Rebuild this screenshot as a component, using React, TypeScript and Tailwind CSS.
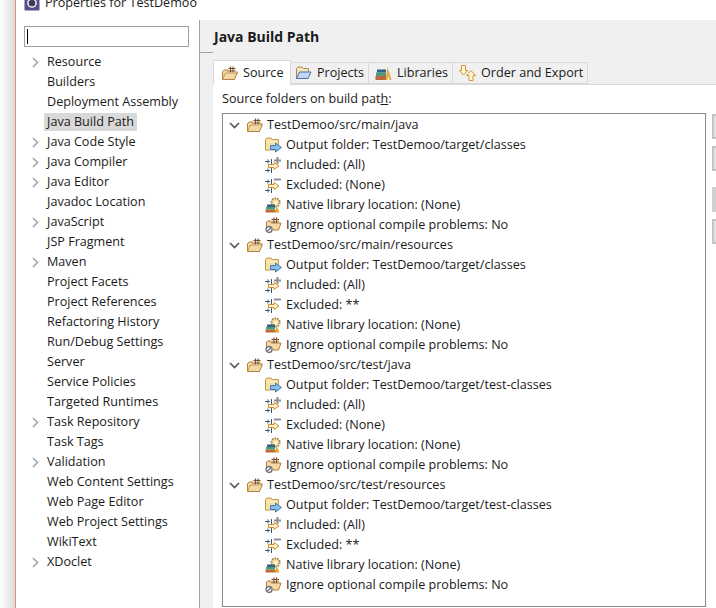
const sidebarItems: [string, boolean][] = [
  ["Resource", true], ["Builders", false], ["Deployment Assembly", false], ["Java Build Path", false],
  ["Java Code Style", true], ["Java Compiler", true], ["Java Editor", true], ["Javadoc Location", false],
  ["JavaScript", true], ["JSP Fragment", false], ["Maven", true], ["Project Facets", false],
  ["Project References", false], ["Refactoring History", false], ["Run/Debug Settings", false], ["Server", false],
  ["Service Policies", false], ["Targeted Runtimes", false], ["Task Repository", true], ["Task Tags", false],
  ["Validation", true], ["Web Content Settings", false], ["Web Page Editor", false], ["Web Project Settings", false],
  ["WikiText", false], ["XDoclet", true],
];

const folders = [
  { path: "TestDemoo/src/main/java", output: "TestDemoo/target/classes", excluded: "(None)" },
  { path: "TestDemoo/src/main/resources", output: "TestDemoo/target/classes", excluded: "**" },
  { path: "TestDemoo/src/test/java", output: "TestDemoo/target/test-classes", excluded: "(None)" },
  { path: "TestDemoo/src/test/resources", output: "TestDemoo/target/test-classes", excluded: "**" },
];

function SourceIcon() {
  return (
    <svg width="16" height="16" viewBox="0 0 16 16" className="shrink-0">
      <path d="M0.5 14.5 V6.5 L2 5 H6 V7 H15.5 L12.5 14.5 Z" fill="#f3d9a6" stroke="#b5803a" />
      <path d="M0.5 14.5 L3.5 8 H15.5" fill="none" stroke="#c99a55" />
      <path d="M6.5 1.5 H13.5 V7.5 H6.5 Z" fill="#f7efe0" />
      <path d="M6.5 3.5 H13.5 M6.5 6 H13.5 M8.5 1.5 V7.5 M11 1.5 V7.5" stroke="#7b4c2c" fill="none" />
    </svg>
  );
}

function ProjectsIcon() {
  return (
    <svg width="17" height="16" viewBox="0 0 17 16" className="shrink-0">
      <path d="M1.5 13.5 V3.5 L3 2 H7 L8.5 3.5 H13.5 V7" fill="#f3e3bd" stroke="#a98a4d" />
      <path d="M1.5 13.5 L4.5 7 H16 L13 13.5 Z" fill="#c2d6f3" stroke="#4a70ad" />
    </svg>
  );
}

function LibrariesIcon() {
  return (
    <svg width="17" height="16" viewBox="0 0 17 16" className="shrink-0">
      <rect x="0.5" y="11" width="11" height="4" fill="#b7693c" />
      <rect x="1" y="7.5" width="10" height="3.5" fill="#4f9a78" />
      <rect x="2" y="4.5" width="9" height="3" fill="#2f5f8c" />
      <path d="M10.5 15 L12.5 2 L16.5 15 H14.5 L13 10 L12.5 15 Z" fill="#e8a93a" />
    </svg>
  );
}

function OrderIcon() {
  return (
    <svg width="17" height="16" viewBox="0 0 17 16" className="shrink-0">
      <path d="M2.5 0.5 H6.5 V5.5 H8.5 L4.5 10 L0.5 5.5 H2.5 Z" fill="#fff6d6" stroke="#c99a35" />
      <path d="M10 15.5 H14 V10.5 H16.5 L12 5.5 L7.5 10.5 H10 Z" fill="#fff6d6" stroke="#d29a2c" />
    </svg>
  );
}

function OutputIcon() {
  return (
    <svg width="17" height="16" viewBox="0 0 17 16" className="shrink-0">
      <path d="M0.5 13 V2.5 L2 1 H6 L7.5 2.5 H13.5 V13 Z" fill="#f8dfa4" stroke="#c1974a" />
      <path d="M1.5 5 H12.5" stroke="#fff3d0" fill="none" />
      <path d="M5.5 8.5 H10.5 V6 L16.5 10.5 L10.5 15 V12.5 H5.5 Z" fill="#8dbfe6" stroke="#3c7bb0" />
    </svg>
  );
}

function FilterIcon({ minus }: { minus?: boolean }) {
  return (
    <svg width="17" height="16" viewBox="0 0 17 16" className="shrink-0">
      <path d="M0 4.5 H5 M3 2.5 V6.5 M6.5 2 V7 M0 13.5 H5 M3 11.5 V15.5 M6.5 11 V16" stroke="#3f5a6c" fill="none" />
      <path d="M3.5 7.5 H9 V5.5 L14 9 L9 12.5 V10.5 H3.5 Z" fill="#fff4d8" stroke="#cf8f2a" />
      {minus ? (
        <path d="M9 2.5 H16" stroke="#8b8f94" strokeWidth="2" />
      ) : (
        <path d="M12.5 0 V7 M9 3.5 H16" stroke="#8b8f94" strokeWidth="2" />
      )}
    </svg>
  );
}

function NativeIcon() {
  return (
    <svg width="17" height="16" viewBox="0 0 17 16" className="shrink-0">
      <circle cx="10.5" cy="5.5" r="4.2" fill="#f5dc9c" stroke="#9a8450" strokeWidth="1.8" strokeDasharray="1.6 1" />
      <circle cx="10.5" cy="5.5" r="1.5" fill="#fff" />
      <rect x="0.5" y="12.5" width="10" height="3" fill="#b7693c" />
      <rect x="1" y="10" width="9" height="2.5" fill="#4f9a78" />
      <rect x="2" y="7.5" width="8" height="2.5" fill="#2f5f8c" />
      <path d="M9.5 15.5 L12 9 L14.5 15.5 Z" fill="#e8a93a" />
    </svg>
  );
}

function IgnoreIcon() {
  return (
    <svg width="17" height="16" viewBox="0 0 17 16" className="shrink-0">
      <path d="M1.5 11 V5 L3 4 H6 V6 H16 L13.5 13 H5 Z" fill="#f3d9a6" stroke="#b5803a" />
      <path d="M6.5 0.5 H14 V6 H6.5 Z" fill="#f7efe0" />
      <path d="M6.5 2.5 H14 M6.5 5 H14 M9 0.5 V6 M11.5 0.5 V6" stroke="#7b4c2c" fill="none" />
      <circle cx="4" cy="12.5" r="3" fill="#fff" stroke="#6f7478" strokeWidth="1.3" />
      <path d="M2 14.5 L6 10.5" stroke="#6f7478" strokeWidth="1.3" />
    </svg>
  );
}

function Chevron({ open }: { open?: boolean }) {
  return open ? (
    <svg width="11" height="11" viewBox="0 0 11 11" className="shrink-0">
      <path d="M1 3 L5.5 7.5 L10 3" fill="none" stroke="#555" strokeWidth="1.6" />
    </svg>
  ) : (
    <svg width="11" height="11" viewBox="0 0 11 11" className="shrink-0">
      <path d="M3 1 L7.5 5.5 L3 10" fill="none" stroke="#a6a6a6" strokeWidth="1.6" />
    </svg>
  );
}

function Leaf({ icon, text }: { icon: React.ReactNode; text: string }) {
  return (
    <div className="flex h-5 items-center gap-1 pl-[42px]">
      {icon}
      <span>{text}</span>
    </div>
  );
}

export default function App() {
  return (
    <div className="flex h-[608px] w-[716px] overflow-hidden bg-white font-['Open_Sans',sans-serif] text-[12.6px] text-[#1a1a1a]">
      <div className="w-[15px] shrink-0 bg-gradient-to-r from-white to-[#dcdcdc]" />
      <div className="flex min-w-0 flex-1 flex-col border-l border-[#e58a7a]">
        <div className="flex h-5 shrink-0 items-start gap-[5px] pl-2">
          <svg width="16" height="16" viewBox="0 0 16 16" className="-mt-[5px] shrink-0">
            <rect x="0.5" y="0.5" width="15" height="15" rx="1" fill="#5b4a8c" />
            <circle cx="8" cy="8" r="5" fill="#d6d6e0" />
            <circle cx="8" cy="8" r="3.2" fill="#3c3a50" />
          </svg>
          <span className="-mt-[6px]">Properties for TestDemoo</span>
        </div>
        <div className="flex min-h-0 flex-1">
          <div className="flex w-[183px] shrink-0 flex-col pl-2">
            <div className="mt-[6px] flex h-[21px] w-[165px] shrink-0 items-center border border-[#a0a0a0] pl-0.5">
              <div className="h-[15px] w-px bg-black" />
            </div>
            <div className="mt-[5px] flex flex-col">
              {sidebarItems.map(([label, more]) => (
                <div key={label} className="flex h-5 items-center">
                  <div className="flex w-[23px] shrink-0 pl-[6px]">{more && <Chevron />}</div>
                  <span className={label === "Java Build Path" ? "-ml-[3px] bg-[#d9d9d9] px-[3px]" : ""}>{label}</span>
                </div>
              ))}
            </div>
          </div>
          <div className="flex min-w-0 flex-1 flex-col border-l border-[#a0a0a0] bg-[#f0f0f0]">
            <div className="flex h-[33px] shrink-0 items-center border-b border-[#a0a0a0] pl-[14px] text-[14px] font-bold">
              Java Build Path
            </div>
            <div className="ml-[13px] flex min-h-0 flex-1 flex-col bg-white">
              <div className="-mt-px flex items-end bg-[#f0f0f0] pt-[8px]">
                <div className="z-10 -mb-px flex h-[25px] w-[78px] items-center gap-[5px] border border-b-0 border-[#d9d9d9] bg-white pl-2">
                  <SourceIcon />
                  <span>Source</span>
                </div>
                <div className="flex h-[22px] w-[78px] items-center gap-[5px] border border-l-0 border-[#d9d9d9] bg-[#f0f0f0] pl-[4px]">
                  <ProjectsIcon />
                  <span>Projects</span>
                </div>
                <div className="flex h-[22px] w-[84px] items-center gap-[5px] border border-l-0 border-[#d9d9d9] bg-[#f0f0f0] pl-[6px]">
                  <LibrariesIcon />
                  <span>Libraries</span>
                </div>
                <div className="flex h-[22px] w-[135px] items-center gap-[5px] border border-l-0 border-[#d9d9d9] bg-[#f0f0f0] pl-[6px]">
                  <OrderIcon />
                  <span>Order and Export</span>
                </div>
              </div>
              <div className="flex min-h-0 flex-1 flex-col border-t border-[#d9d9d9] pt-[4px] pb-px pl-[9px]">
                <div className="flex h-5 items-center">
                  <span>
                    Source folders on build pat<span className="underline">h</span>:
                  </span>
                </div>
                <div className="mt-[4px] flex min-h-0 flex-1">
                  <div className="w-[484px] shrink-0 border border-[#8a8a8a] pt-px">
                    {folders.map((f) => (
                      <div key={f.path}>
                        <div className="flex h-5 items-center pl-[6px]">
                          <Chevron open />
                          <div className="ml-[7px] mr-[4px]">
                            <SourceIcon />
                          </div>
                          <span>{f.path}</span>
                        </div>
                        <Leaf icon={<OutputIcon />} text={`Output folder: ${f.output}`} />
                        <Leaf icon={<FilterIcon />} text="Included: (All)" />
                        <Leaf icon={<FilterIcon minus />} text={`Excluded: ${f.excluded}`} />
                        <Leaf icon={<NativeIcon />} text="Native library location: (None)" />
                        <Leaf icon={<IgnoreIcon />} text="Ignore optional compile problems: No" />
                      </div>
                    ))}
                  </div>
                  <div className="mt-px ml-[6px] flex flex-col">
                    <div className="h-[25px] w-10 border-2 border-[#c4c4c4] bg-[#e4e4e4]" />
                    <div className="mt-[7px] h-[25px] w-10 border-2 border-[#c4c4c4] bg-[#e4e4e4]" />
                    <div className="mt-[16px] h-[25px] w-10 bg-[#cfcfcf]" />
                    <div className="mt-[7px] h-[25px] w-10 border-2 border-[#c4c4c4] bg-[#e4e4e4]" />
                  </div>
                </div>
              </div>
            </div>
          </div>
        </div>
      </div>
    </div>
  );
}
